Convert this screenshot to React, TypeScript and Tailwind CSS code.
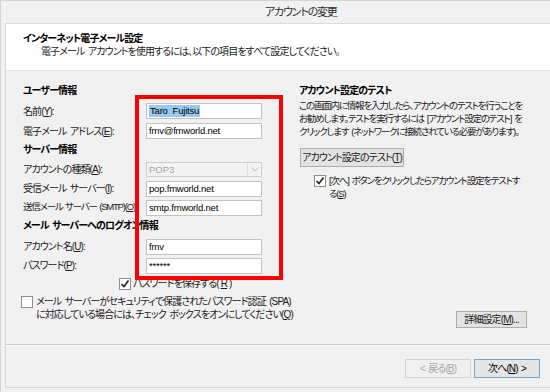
import React from "react";

const Key = ({ k }: { k: string }) => (
  <>
    (<span className="underline">{k}</span>)
  </>
);

const Field = ({ value, selected }: { value: string; selected?: boolean }) => (
  <div className="w-[116px] h-[16px] bg-white border border-[#c3c3c3] flex items-center pl-[2px] text-[9.5px] tracking-[-0.2px] [word-spacing:0px] leading-none text-black whitespace-pre">
    {selected ? <span className="bg-[#99c9ef] px-[1px] py-[1px]">{value}</span> : value}
  </div>
);

const Row = ({ label, k, children, h, tight }: { label: string; k: string; children: React.ReactNode; h: string; tight?: boolean }) => (
  <div className={`flex items-center ${h}`}>
    <div className={`w-[123px] shrink-0 whitespace-nowrap ${tight ? "text-[9.5px] tracking-[-1.2px] [word-spacing:1px]" : ""}`}>
      {label}
      <Key k={k} />:
    </div>
    {children}
  </div>
);

const Check = () => (
  <span className="w-[12px] h-[12px] bg-white border border-[#8f8f8f] flex items-center justify-center shrink-0">
    <svg width="10" height="10" viewBox="0 0 10 10">
      <path d="M1.5 5 L4 7.5 L8.5 1.5" stroke="#1f1f1f" strokeWidth="1.6" fill="none" />
    </svg>
  </span>
);

export default function App() {
  return (
    <div className="w-[550px] h-[392px] bg-[#f1f1f1] relative overflow-hidden font-['Liberation_Sans','Noto_Sans_CJK_JP',sans-serif] [font-feature-settings:'palt'] text-[10px] tracking-[-0.9px] [word-spacing:1.5px] text-[#1a1a1a] border-l border-t border-[#d4d4d4]">
      {/* title */}
      <div className="h-[22px] flex items-center pl-[264px] text-[11px] tracking-[-1.2px] text-[#2d2d2d]">アカウントの変更</div>

      <div className="ml-[4px] border-l border-b border-[#d8d8d8] h-[365px] flex flex-col">
        {/* header */}
        <div className="h-[47px] bg-white border-t border-[#dadada] pl-[17px] pt-[8px] leading-[13px]">
          <div className="font-bold text-black">インターネット電子メール設定</div>
          <div className="pl-[18px]">電子メール アカウントを使用するには、以下の項目をすべて設定してください。</div>
        </div>

        {/* body */}
        <div className="h-[274px] flex border-t border-[#e6e6e6]">
          <div className="w-[268px] pl-[17px] pt-[11px]">
            <div className="h-[16px] flex items-center font-bold text-black">ユーザー情報</div>
            <div className="mt-[3px]">
              <Row label="名前" k="Y" h="h-[20px]"><Field value="Taro  Fujitsu" selected /></Row>
              <Row label="電子メール アドレス" k="E" h="h-[20px]"><Field value="fmv@fmworld.net" /></Row>
            </div>
            <div className="h-[16px] flex items-center font-bold text-black">サーバー情報</div>
            <div className="mt-[3px]">
              <Row label="アカウントの種類" k="A" h="h-[19px]">
                <div className="w-[116px] h-[15px] bg-[#f3f3f3] border border-[#cfcfcf] flex items-center justify-between pl-[2px] text-[9.5px] tracking-normal leading-none text-[#a3a3a3]">
                  POP3
                  <span className="w-[14px] h-full border-l border-[#dcdcdc] flex items-center justify-center">
                    <svg width="8" height="5" viewBox="0 0 8 5">
                      <path d="M0.5 0.5 L4 4 L7.5 0.5" stroke="#b8b8b8" fill="none" />
                    </svg>
                  </span>
                </div>
              </Row>
              <Row label="受信メール サーバー" k="I" h="h-[19px]"><Field value="pop.fmworld.net" /></Row>
              <Row label="送信メール サーバー (SMTP)" k="O" h="h-[19px]" tight><Field value="smtp.fmworld.net" /></Row>
            </div>
            <div className="h-[16px] flex items-center font-bold text-black">メール サーバーへのログオン情報</div>
            <div className="mt-[4px]">
              <Row label="アカウント名" k="U" h="h-[19px]"><Field value="fmv" /></Row>
              <Row label="パスワード" k="P" h="h-[19px]"><Field value="******" /></Row>
            </div>
            <div className="h-[17px] flex items-center gap-[2px] pl-[96px] whitespace-nowrap">
              <Check />
              パスワードを保存する<Key k="R" />
            </div>
            <div className="mt-[3px] flex gap-[3px] leading-[13px]">
              <span className="w-[12px] h-[12px] bg-white border border-[#8f8f8f] shrink-0 mt-[1px] -ml-[2px]" />
              <div className="whitespace-nowrap">
                メール サーバーがセキュリティで保護されたパスワード認証 (SPA)
                <br />
                に対応している場合には、チェック ボックスをオンにしてください<Key k="Q" />
              </div>
            </div>
          </div>

          <div className="flex-1 pl-[25px] pt-[11px] flex flex-col text-[9.5px] tracking-[-1.2px]">
            <div className="h-[16px] flex items-center font-bold text-black text-[10px] tracking-[-0.9px]">アカウント設定のテスト</div>
            <div className="mt-[1px] leading-[13px] whitespace-nowrap">
              この画面内に情報を入力したら、アカウントのテストを行うことを
              <br />
              お勧めします。テストを実行するには [アカウント設定のテスト] を
              <br />
              クリックします (ネットワークに接続されている必要があります)。
            </div>
            <div className="mt-[10px] ml-[1px] w-[104px] h-[19px] bg-[#e3e3e3] border border-[#adadad] flex items-center justify-center whitespace-nowrap text-[10px] tracking-[-0.9px]">
              アカウント設定のテスト<Key k="T" />
            </div>
            <div className="mt-[7px] ml-[15px] flex gap-[3px] leading-[13px] whitespace-nowrap">
              <span className="mt-[1px]"><Check /></span>
              <div>
                [次へ] ボタンをクリックしたらアカウント設定をテストす
                <br />
                る<Key k="S" />
              </div>
            </div>
            <div className="flex-1" />
            <div className="mb-[16px] ml-[157px] w-[71px] h-[17px] bg-[#e3e3e3] border border-[#adadad] flex items-center justify-center whitespace-nowrap text-[10px] tracking-[-0.9px]">
              詳細設定<Key k="M" />...
            </div>
          </div>
        </div>

        {/* separator */}
        <div className="h-[2px] border-t border-[#c9c9c9] border-b border-b-white" />

        {/* footer */}
        <div className="flex-1 flex justify-end items-start pt-[13px] pr-[10px] gap-[3px]">
          <div className="w-[66px] h-[19px] bg-[#f0f0f0] border border-[#d2d2d2] flex items-center justify-center text-[#a5a5a5] whitespace-nowrap">
            &lt; 戻る<Key k="B" />
          </div>
          <div className="w-[66px] h-[19px] bg-[#e5e5e5] border border-[#6fa6e0] flex items-center justify-center text-black whitespace-nowrap">
            次へ<Key k="N" /> &gt;
          </div>
        </div>
      </div>

      {/* red highlight annotation */}
      <div className="absolute left-[134px] top-[94px] w-[148px] h-[185px] border-[4px] border-[#ff0000]" />
    </div>
  );
}
